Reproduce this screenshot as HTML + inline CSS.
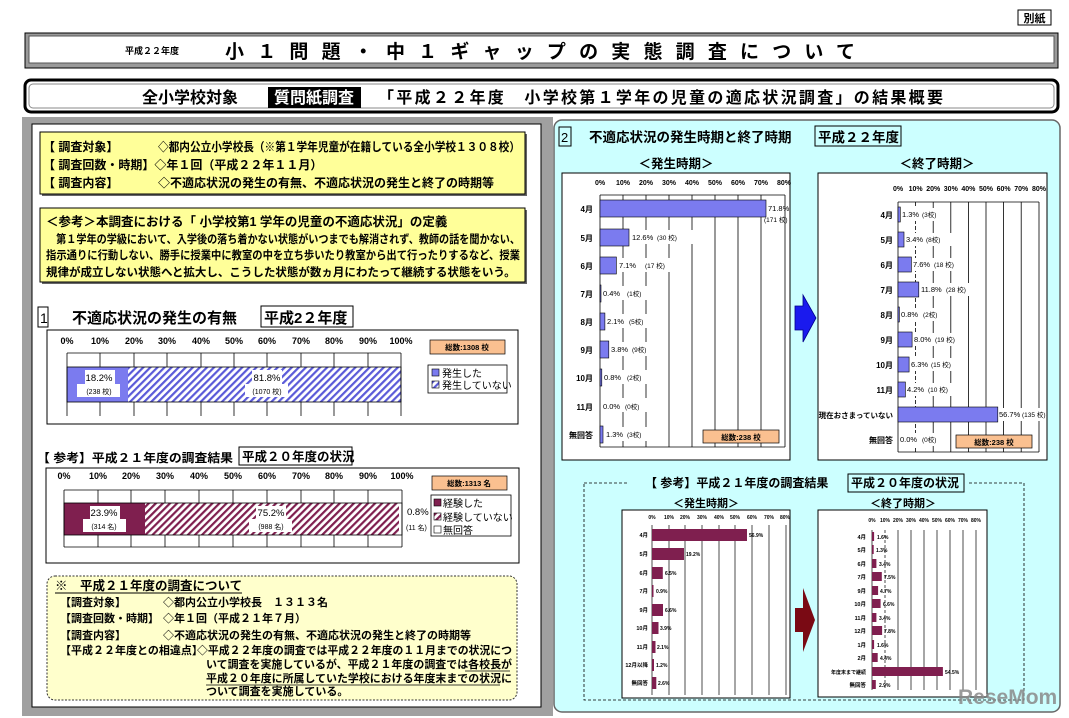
<!DOCTYPE html>
<html><head><meta charset="utf-8"><style>
html,body{margin:0;padding:0;background:#fff;}
svg{display:block;font-family:"Liberation Sans","Noto Sans CJK JP",sans-serif;}
.b{font-weight:bold;}
</style></head><body>
<svg width="1069" height="718" viewBox="0 0 1069 718" xmlns="http://www.w3.org/2000/svg">
<defs>
<pattern id="hb" width="5" height="5" patternUnits="userSpaceOnUse" patternTransform="rotate(45)"><rect width="5" height="5" fill="#fff"/><rect width="2.2" height="5" fill="#5a5ad8"/></pattern>
<pattern id="hm" width="5" height="5" patternUnits="userSpaceOnUse" patternTransform="rotate(45)"><rect width="5" height="5" fill="#fff"/><rect width="2.2" height="5" fill="#7f1f4f"/></pattern>
</defs>
<rect x="1018" y="10" width="33" height="15" fill="#fff" stroke="#000"/>
<text x="1034.5" y="22" font-size="11" text-anchor="middle" class="b">別紙</text>
<rect x="25" y="33" width="1033" height="35" fill="#9a9a9a" stroke="#000"/>
<rect x="29" y="36" width="1025" height="27" fill="#fff" stroke="#555"/>
<text x="125" y="54" font-size="9" class="b">平成２２年度</text>
<text x="225" y="58" font-size="19" class="b" textLength="630" lengthAdjust="spacing">小１問題・中１ギャップの実態調査について</text>
<rect x="25" y="80" width="1033" height="32" rx="6" fill="#fff" stroke="#000" stroke-width="3"/>
<rect x="29" y="84" width="1025" height="24" rx="4" fill="none" stroke="#888" stroke-width="1"/>
<text x="142" y="103" font-size="16" class="b">全小学校対象</text>
<rect x="268" y="87" width="93" height="21" fill="#000"/>
<text x="314" y="103" font-size="16" class="b" fill="#fff" text-anchor="middle">質問紙調査</text>
<text x="378" y="103" font-size="16" class="b" textLength="565" lengthAdjust="spacing">「平成２２年度　小学校第１学年の児童の適応状況調査」の結果概要</text>

<rect x="22" y="117" width="531" height="599" fill="#a0a0a0"/>
<rect x="32" y="124" width="509" height="583" fill="#fff" stroke="#000"/>
<rect x="42" y="134" width="485" height="62" fill="#666"/>
<rect x="40" y="132" width="485" height="62" fill="#ffff99" stroke="#000"/>
<g font-size="12" class="b">
<text x="43" y="151">【 調査対象】</text><text x="158" y="151" textLength="362" lengthAdjust="spacingAndGlyphs">◇都内公立小学校長（※第１学年児童が在籍している全小学校１３０８校）</text>
<text x="43" y="169">【 調査回数・時期】◇年１回（平成２２年１１月）</text>
<text x="43" y="187">【 調査内容】</text><text x="158" y="187">◇不適応状況の発生の有無、不適応状況の発生と終了の時期等</text>
</g>
<rect x="42" y="210" width="485" height="74" fill="#666"/>
<rect x="40" y="208" width="485" height="74" fill="#ffff99" stroke="#000"/>
<text x="46" y="226" font-size="12.5" class="b">＜参考＞本調査における「 小学校第1 学年の児童の不適応状況」の定義</text>
<g font-size="11.5" class="b">
<text x="46" y="243" textLength="474" lengthAdjust="spacingAndGlyphs">　第１学年の学級において、入学後の落ち着かない状態がいつまでも解消されず、教師の話を聞かない、</text>
<text x="46" y="259" textLength="474" lengthAdjust="spacingAndGlyphs">指示通りに行動しない、勝手に授業中に教室の中を立ち歩いたり教室から出て行ったりするなど、授業</text>
<text x="46" y="276">規律が成立しない状態へと拡大し、こうした状態が数ヵ月にわたって継続する状態をいう。</text>
</g>
<rect x="38" y="307" width="10" height="20" fill="none" stroke="#000"/>
<text x="40" y="323" font-size="14">1</text>
<text x="72" y="323" font-size="15" class="b">不適応状況の発生の有無</text>
<rect x="261" y="306" width="92" height="21" fill="none" stroke="#000"/>
<text x="264" y="323" font-size="15" class="b">平成2２年度</text>
<rect x="47" y="330" width="471" height="94" fill="#fff" stroke="#000"/>
<g font-size="9" class="b" text-anchor="middle">
<text x="67" y="344">0%</text><text x="100" y="344">10%</text><text x="134" y="344">20%</text><text x="167" y="344">30%</text><text x="201" y="344">40%</text><text x="234" y="344">50%</text><text x="267" y="344">60%</text><text x="301" y="344">70%</text><text x="334" y="344">80%</text><text x="368" y="344">90%</text><text x="401" y="344">100%</text>
</g>
<rect x="67" y="367" width="61" height="35" fill="#7b7bef"/>
<rect x="128" y="367" width="273" height="35" fill="url(#hb)"/>
<g stroke="#000" stroke-width="0.8">
<line x1="67" y1="353" x2="401" y2="353"/>
<line x1="67" y1="353" x2="67" y2="416"/><line x1="100" y1="353" x2="100" y2="367"/><line x1="134" y1="353" x2="134" y2="367"/><line x1="167" y1="353" x2="167" y2="367"/><line x1="201" y1="353" x2="201" y2="367"/><line x1="234" y1="353" x2="234" y2="367"/><line x1="267" y1="353" x2="267" y2="367"/><line x1="301" y1="353" x2="301" y2="367"/><line x1="334" y1="353" x2="334" y2="367"/><line x1="368" y1="353" x2="368" y2="367"/><line x1="401" y1="353" x2="401" y2="416"/>
<line x1="100" y1="402" x2="100" y2="416"/><line x1="134" y1="402" x2="134" y2="416"/><line x1="167" y1="402" x2="167" y2="416"/><line x1="201" y1="402" x2="201" y2="416"/><line x1="234" y1="402" x2="234" y2="416"/><line x1="267" y1="402" x2="267" y2="416"/><line x1="301" y1="402" x2="301" y2="416"/><line x1="334" y1="402" x2="334" y2="416"/><line x1="368" y1="402" x2="368" y2="416"/>
<rect x="67" y="367" width="334" height="35" fill="none"/>
</g>
<rect x="85" y="370" width="30" height="14" fill="#fff"/><rect x="77" y="384" width="43" height="13" fill="#fff"/>
<text x="99" y="381" font-size="9.5" text-anchor="middle">18.2%</text><text x="99" y="394" font-size="7" text-anchor="middle">(238 校)</text>
<rect x="252" y="370" width="30" height="14" fill="#fff"/><rect x="245" y="384" width="43" height="13" fill="#fff"/>
<text x="267" y="381" font-size="9.5" text-anchor="middle">81.8%</text><text x="267" y="394" font-size="7" text-anchor="middle">(1070 校)</text>
<rect x="430" y="340" width="75" height="14" fill="#fac090" stroke="#000" stroke-width="0.7"/>
<text x="467" y="350" font-size="7.5" text-anchor="middle" class="b">総数:1308 校</text>
<rect x="428" y="365" width="79" height="28" fill="#fff" stroke="#000" stroke-width="0.8"/>
<rect x="432" y="369" width="7" height="7" fill="#7b7bef" stroke="#000" stroke-width="0.6"/><text x="442" y="377" font-size="10">発生した</text>
<rect x="432" y="381" width="7" height="7" fill="url(#hb)" stroke="#000" stroke-width="0.6"/><text x="442" y="389" font-size="10">発生していない</text>

<text x="37" y="462" font-size="12" class="b" textLength="196" lengthAdjust="spacingAndGlyphs">【 参考】平成２１年度の調査結果</text>
<rect x="239" y="447" width="113" height="18" fill="none" stroke="#000"/>
<text x="242" y="461" font-size="12.5" class="b">平成２０年度の状況</text>
<rect x="46" y="468" width="473" height="95" fill="#fff" stroke="#000"/>
<g font-size="9" class="b" text-anchor="middle">
<text x="64" y="479">0%</text><text x="98" y="479">10%</text><text x="131" y="479">20%</text><text x="165" y="479">30%</text><text x="199" y="479">40%</text><text x="233" y="479">50%</text><text x="267" y="479">60%</text><text x="301" y="479">70%</text><text x="334" y="479">80%</text><text x="368" y="479">90%</text><text x="402" y="479">100%</text>
</g>
<rect x="64" y="503" width="81" height="32" fill="#7f1f4f"/>
<rect x="145" y="503" width="254" height="32" fill="url(#hm)"/>
<g stroke="#000" stroke-width="0.8" fill="none">
<line x1="64" y1="490" x2="402" y2="490"/>
<line x1="64" y1="490" x2="64" y2="547"/><line x1="402" y1="490" x2="402" y2="547"/>
<line x1="98" y1="490" x2="98" y2="503"/><line x1="131" y1="490" x2="131" y2="503"/><line x1="165" y1="490" x2="165" y2="503"/><line x1="199" y1="490" x2="199" y2="503"/><line x1="233" y1="490" x2="233" y2="503"/><line x1="267" y1="490" x2="267" y2="503"/><line x1="301" y1="490" x2="301" y2="503"/><line x1="334" y1="490" x2="334" y2="503"/><line x1="368" y1="490" x2="368" y2="503"/>
<line x1="98" y1="535" x2="98" y2="547"/><line x1="131" y1="535" x2="131" y2="547"/><line x1="165" y1="535" x2="165" y2="547"/><line x1="199" y1="535" x2="199" y2="547"/><line x1="233" y1="535" x2="233" y2="547"/><line x1="267" y1="535" x2="267" y2="547"/><line x1="301" y1="535" x2="301" y2="547"/><line x1="334" y1="535" x2="334" y2="547"/><line x1="368" y1="535" x2="368" y2="547"/>
<line x1="64" y1="547" x2="402" y2="547"/>
<rect x="64" y="503" width="338" height="32"/>
</g>
<rect x="90" y="506" width="30" height="13" fill="#fff"/><rect x="83" y="519" width="43" height="13" fill="#fff"/>
<text x="104" y="516" font-size="9.5" text-anchor="middle">23.9%</text><text x="104" y="529" font-size="7" text-anchor="middle">(314 名)</text>
<rect x="256" y="506" width="30" height="13" fill="#fff"/><rect x="249" y="519" width="43" height="13" fill="#fff"/>
<text x="271" y="516" font-size="9.5" text-anchor="middle">75.2%</text><text x="271" y="529" font-size="7" text-anchor="middle">(988 名)</text>
<text x="407" y="515" font-size="9.5">0.8%</text><text x="406" y="530" font-size="7">(11 名)</text>
<rect x="432" y="476" width="75" height="14" fill="#fac090" stroke="#000" stroke-width="0.7"/>
<text x="469" y="486" font-size="7.5" text-anchor="middle" class="b">総数:1313 名</text>
<rect x="431" y="495" width="80" height="41" fill="#fff" stroke="#000" stroke-width="0.8"/>
<rect x="434" y="499" width="7" height="7" fill="#7f1f4f" stroke="#000" stroke-width="0.6"/><text x="443" y="507" font-size="10">経験した</text>
<rect x="434" y="513" width="7" height="7" fill="url(#hm)" stroke="#000" stroke-width="0.6"/><text x="443" y="521" font-size="10">経験していない</text>
<rect x="434" y="526" width="7" height="7" fill="#fff" stroke="#000" stroke-width="0.6"/><text x="443" y="534" font-size="10">無回答</text>

<rect x="47" y="576" width="470" height="124" rx="8" fill="#ffffcc" stroke="#333" stroke-dasharray="2,1.5"/>
<text x="55" y="590" font-size="12.5" class="b">※　平成２１年度の調査について</text>
<line x1="55" y1="593" x2="242" y2="593" stroke="#000"/>
<g font-size="11" class="b">
<text x="60" y="606">【調査対象】</text><text x="163" y="606">◇都内公立小学校長　１３１３名</text>
<text x="60" y="622">【調査回数・時期】</text><text x="163" y="622">◇年１回（平成２１年７月）</text>
<text x="60" y="639">【調査内容】</text><text x="163" y="639">◇不適応状況の発生の有無、不適応状況の発生と終了の時期等</text>
<text x="60" y="654">【平成２２年度との相違点】</text><text x="197" y="654" textLength="315" lengthAdjust="spacingAndGlyphs">◇平成２２年度の調査では平成２２年度の１１月までの状況につ</text>
<text x="206" y="668" textLength="306" lengthAdjust="spacingAndGlyphs">いて調査を実施しているが、平成２１年度の調査では各校長が</text>
<text x="206" y="682" textLength="306" lengthAdjust="spacingAndGlyphs">平成２０年度に所属していた学校における年度末までの状況に</text>
<text x="206" y="695">ついて調査を実施している。</text>
</g>
<line x1="465" y1="671" x2="510" y2="671" stroke="#000" stroke-width="0.8"/>
<line x1="206" y1="685" x2="500" y2="685" stroke="#000" stroke-width="0.8"/>

<rect x="554" y="120" width="506" height="592" rx="8" fill="#ccffff" stroke="#666" stroke-width="1.5"/>
<rect x="559" y="127" width="12" height="19" fill="none" stroke="#000"/>
<text x="561" y="142" font-size="13">2</text>
<text x="589" y="142" font-size="13.5" class="b">不適応状況の発生時期と終了時期</text>
<rect x="815" y="126" width="86" height="20" fill="none" stroke="#000"/>
<text x="818" y="142" font-size="13.5" class="b">平成２２年度</text>
<text x="676" y="168" font-size="12.5" class="b" text-anchor="middle">＜発生時期＞</text>
<text x="937" y="168" font-size="12.5" class="b" text-anchor="middle">＜終了時期＞</text>

<rect x="562" y="173" width="228" height="287" fill="#fff" stroke="#000"/>
<g font-size="7" class="b" text-anchor="middle">
<text x="600" y="185">0%</text><text x="623" y="185">10%</text><text x="646" y="185">20%</text><text x="669" y="185">30%</text><text x="692" y="185">40%</text><text x="715" y="185">50%</text><text x="738" y="185">60%</text><text x="761" y="185">70%</text><text x="784" y="185">80%</text>
</g>
<g stroke="#000" stroke-width="0.8">
<line x1="600" y1="195" x2="785" y2="195"/>
<line x1="600" y1="195" x2="600" y2="447"/><line x1="623" y1="195" x2="623" y2="447"/><line x1="646" y1="195" x2="646" y2="447"/><line x1="669" y1="195" x2="669" y2="447"/><line x1="692" y1="195" x2="692" y2="447"/><line x1="715" y1="195" x2="715" y2="447"/><line x1="738" y1="195" x2="738" y2="447"/><line x1="761" y1="195" x2="761" y2="447"/><line x1="785" y1="195" x2="785" y2="447"/>
<line x1="600" y1="447" x2="785" y2="447"/>
</g>
<g fill="#7b7bef" stroke="#000" stroke-width="0.6">
<rect x="600" y="200" width="166" height="17"/><rect x="600" y="229" width="29" height="17"/><rect x="600" y="257" width="16.4" height="17"/><rect x="600" y="285" width="1" height="17"/><rect x="600" y="313" width="4.9" height="17"/><rect x="600" y="341" width="8.8" height="17"/><rect x="600" y="369" width="1.8" height="17"/><rect x="600" y="426" width="3" height="17"/>
</g>
<g fill="#fff"><rect x="632" y="230" width="70" height="14"/><rect x="619" y="258" width="60" height="14"/><rect x="603" y="286" width="60" height="14"/><rect x="607" y="314" width="56" height="14"/><rect x="611" y="342" width="52" height="14"/><rect x="604" y="370" width="58" height="14"/><rect x="603" y="398" width="58" height="14"/><rect x="606" y="427" width="56" height="14"/></g>
<g font-size="8" text-anchor="end" class="b">
<text x="593" y="212">4月</text><text x="593" y="241">5月</text><text x="593" y="269">6月</text><text x="593" y="297">7月</text><text x="593" y="325">8月</text><text x="593" y="353">9月</text><text x="593" y="381">10月</text><text x="593" y="410">11月</text><text x="593" y="438">無回答</text>
</g>
<g font-size="7.5">
<text x="768" y="211">71.8%</text><text x="764" y="222" font-size="6.5">(171 校)</text>
<text x="632" y="240">12.6%</text><text x="657" y="240" font-size="6.5">(30 校)</text>
<text x="619" y="268">7.1%</text><text x="645" y="268" font-size="6.5">(17 校)</text>
<text x="603" y="296">0.4%</text><text x="627" y="296" font-size="6.5">(1校)</text>
<text x="607" y="324">2.1%</text><text x="629" y="324" font-size="6.5">(5校)</text>
<text x="611" y="352">3.8%</text><text x="632" y="352" font-size="6.5">(9校)</text>
<text x="604" y="380">0.8%</text><text x="627" y="380" font-size="6.5">(2校)</text>
<text x="603" y="409">0.0%</text><text x="625" y="409" font-size="6.5">(0校)</text>
<text x="606" y="437">1.3%</text><text x="627" y="437" font-size="6.5">(3校)</text>
</g>
<rect x="703" y="430" width="76" height="13" fill="#fac090" stroke="#000" stroke-width="0.7"/>
<text x="741" y="440" font-size="7.5" text-anchor="middle" class="b">総数:238 校</text>

<path d="M795 306 L803 306 L803 295 L816 318 L803 342 L803 330 L795 330 Z" fill="#1a1aee" stroke="#00008b" stroke-width="0.8"/>

<rect x="818" y="173" width="229" height="287" fill="#fff" stroke="#000"/>
<g font-size="7" class="b" text-anchor="middle">
<text x="898" y="191">0%</text><text x="915.6" y="191">10%</text><text x="933.2" y="191">20%</text><text x="950.8" y="191">30%</text><text x="968.4" y="191">40%</text><text x="986" y="191">50%</text><text x="1003.6" y="191">60%</text><text x="1021.2" y="191">70%</text><text x="1039" y="191">80%</text>
</g>
<g stroke="#000" stroke-width="0.8">
<line x1="898" y1="202" x2="1039" y2="202"/>
<line x1="898" y1="202" x2="898" y2="452"/><line x1="915.6" y1="202" x2="915.6" y2="452" stroke-dasharray="4,2"/><line x1="933.2" y1="202" x2="933.2" y2="452"/><line x1="950.8" y1="202" x2="950.8" y2="452"/><line x1="968.4" y1="202" x2="968.4" y2="452"/><line x1="986" y1="202" x2="986" y2="452"/><line x1="1003.6" y1="202" x2="1003.6" y2="452"/><line x1="1021.2" y1="202" x2="1021.2" y2="452"/><line x1="1039" y1="202" x2="1039" y2="452"/>
<line x1="898" y1="452" x2="1039" y2="452"/>
</g>
<g fill="#7b7bef" stroke="#000" stroke-width="0.6">
<rect x="898" y="207" width="2.3" height="15"/><rect x="898" y="232" width="6" height="15"/><rect x="898" y="257" width="13.4" height="15"/><rect x="898" y="282" width="20.8" height="15"/><rect x="898" y="307" width="1.4" height="15"/><rect x="898" y="332" width="14.1" height="15"/><rect x="898" y="357" width="11.1" height="15"/><rect x="898" y="382" width="7.4" height="15"/><rect x="898" y="407" width="99.8" height="15"/>
</g>
<g fill="#fff"><rect x="902" y="208" width="48" height="13"/><rect x="906" y="233" width="46" height="13"/><rect x="913" y="258" width="50" height="13"/><rect x="921" y="283" width="50" height="13"/><rect x="901" y="308" width="46" height="13"/><rect x="914" y="333" width="50" height="13"/><rect x="911" y="358" width="50" height="13"/><rect x="907" y="383" width="50" height="13"/><rect x="999" y="408" width="46" height="13"/><rect x="900" y="433" width="46" height="13"/></g>
<g font-size="8" text-anchor="end" class="b">
<text x="893" y="218">4月</text><text x="893" y="243">5月</text><text x="893" y="268">6月</text><text x="893" y="293">7月</text><text x="893" y="318">8月</text><text x="893" y="343">9月</text><text x="893" y="368">10月</text><text x="893" y="393">11月</text><text x="893" y="418" font-size="7.5">現在おさまっていない</text><text x="893" y="443">無回答</text>
</g>
<g font-size="7.5">
<text x="902" y="217">1.3%</text><text x="922" y="217" font-size="6.5">(3校)</text>
<text x="906" y="242">3.4%</text><text x="926" y="242" font-size="6.5">(8校)</text>
<text x="913" y="267">7.6%</text><text x="934" y="267" font-size="6.5">(18 校)</text>
<text x="921" y="292">11.8%</text><text x="946" y="292" font-size="6.5">(28 校)</text>
<text x="901" y="317">0.8%</text><text x="923" y="317" font-size="6.5">(2校)</text>
<text x="914" y="342">8.0%</text><text x="935" y="342" font-size="6.5">(19 校)</text>
<text x="911" y="367">6.3%</text><text x="931" y="367" font-size="6.5">(15 校)</text>
<text x="907" y="392">4.2%</text><text x="928" y="392" font-size="6.5">(10 校)</text>
<text x="999" y="417">56.7%</text><text x="1022" y="417" font-size="6.5">(135 校)</text>
<text x="900" y="442">0.0%</text><text x="922" y="442" font-size="6.5">(0校)</text>
</g>
<rect x="956" y="435" width="76" height="13" fill="#fac090" stroke="#000" stroke-width="0.7"/>
<text x="994" y="445" font-size="7.5" text-anchor="middle" class="b">総数:238 校</text>

<rect x="584" y="483" width="440" height="217" fill="none" stroke="#000" stroke-dasharray="3,2" stroke-width="0.8"/>
<rect x="629" y="474" width="340" height="18" fill="#ccffff"/>
<text x="645" y="487" font-size="12" class="b">【 参考】平成２１年度の調査結果</text>
<rect x="848" y="474" width="116" height="18" fill="none" stroke="#000"/>
<text x="851" y="487" font-size="12" class="b">平成２０年度の状況</text>
<text x="706" y="507" font-size="11" class="b" text-anchor="middle">＜発生時期＞</text>
<text x="903" y="507" font-size="11" class="b" text-anchor="middle">＜終了時期＞</text>

<rect x="622" y="510" width="168" height="188" fill="#fff" stroke="#000"/>
<g font-size="5" class="b" text-anchor="middle">
<text x="652" y="519">0%</text><text x="669" y="519">10%</text><text x="685" y="519">20%</text><text x="702" y="519">30%</text><text x="719" y="519">40%</text><text x="735" y="519">50%</text><text x="752" y="519">60%</text><text x="769" y="519">70%</text><text x="785" y="519">80%</text>
</g>
<g stroke="#000" stroke-width="0.7">
<line x1="652" y1="525" x2="652" y2="695"/><line x1="669" y1="525" x2="669" y2="695"/><line x1="685" y1="525" x2="685" y2="695"/><line x1="702" y1="525" x2="702" y2="695"/><line x1="719" y1="525" x2="719" y2="695"/><line x1="735" y1="525" x2="735" y2="695"/><line x1="752" y1="525" x2="752" y2="695"/><line x1="769" y1="525" x2="769" y2="695"/><line x1="786" y1="525" x2="786" y2="695"/>
</g>
<g fill="#7f1f4f">
<rect x="652" y="529" width="95" height="12"/><rect x="652" y="548" width="32" height="12"/><rect x="652" y="567" width="10.8" height="12"/><rect x="652" y="585" width="1.5" height="12"/><rect x="652" y="604" width="11" height="12"/><rect x="652" y="622" width="6.5" height="12"/><rect x="652" y="641" width="3.5" height="12"/><rect x="652" y="659" width="2" height="12"/><rect x="652" y="677" width="4.3" height="12"/>
</g>
<g font-size="5.5" class="b" text-anchor="end">
<text x="648" y="537">4月</text><text x="648" y="556">5月</text><text x="648" y="575">6月</text><text x="648" y="593">7月</text><text x="648" y="612">9月</text><text x="648" y="630">10月</text><text x="648" y="649">11月</text><text x="648" y="667">12月以降</text><text x="648" y="685">無回答</text>
</g>
<g font-size="5" class="b">
<text x="749" y="537">56.9%</text><text x="686" y="556">19.2%</text><text x="665" y="575">6.5%</text><text x="656" y="593">0.9%</text><text x="665" y="612">6.6%</text><text x="660" y="630">3.9%</text><text x="657" y="649">2.1%</text><text x="656" y="667">1.2%</text><text x="658" y="685">2.6%</text>
</g>
<path d="M795 608 L803 608 L803 588 L815 620 L803 652 L803 632 L795 632 Z" fill="#7a0a14"/>
<rect x="818" y="510" width="169" height="187" fill="#fff" stroke="#000"/>
<g font-size="5" class="b" text-anchor="middle">
<text x="872" y="522">0%</text><text x="885" y="522">10%</text><text x="898" y="522">20%</text><text x="911" y="522">30%</text><text x="924" y="522">40%</text><text x="937" y="522">50%</text><text x="950" y="522">60%</text><text x="963" y="522">70%</text><text x="976" y="522">80%</text>
</g>
<g stroke="#000" stroke-width="0.7">
<line x1="872" y1="530" x2="872" y2="690"/><line x1="885" y1="530" x2="885" y2="690" stroke-dasharray="3,2"/><line x1="898" y1="530" x2="898" y2="690"/><line x1="911" y1="530" x2="911" y2="690"/><line x1="924" y1="530" x2="924" y2="690"/><line x1="937" y1="530" x2="937" y2="690"/><line x1="950" y1="530" x2="950" y2="690"/><line x1="963" y1="530" x2="963" y2="690"/><line x1="976" y1="530" x2="976" y2="690"/>
</g>
<g fill="#7f1f4f">
<rect x="872" y="532" width="2.1" height="9"/><rect x="872" y="545" width="1.7" height="9"/><rect x="872" y="559" width="4.4" height="9"/><rect x="872" y="572" width="9.8" height="9"/><rect x="872" y="586" width="6.1" height="9"/><rect x="872" y="599" width="8.6" height="9"/><rect x="872" y="613" width="4.4" height="9"/><rect x="872" y="626" width="10.1" height="9"/><rect x="872" y="640" width="2.1" height="9"/><rect x="872" y="653" width="5.7" height="9"/><rect x="872" y="667" width="70.9" height="9"/><rect x="872" y="680" width="3.8" height="9"/>
</g>
<g font-size="5.5" class="b" text-anchor="end">
<text x="866" y="539">4月</text><text x="866" y="552">5月</text><text x="866" y="566">6月</text><text x="866" y="579">7月</text><text x="866" y="593">9月</text><text x="866" y="606">10月</text><text x="866" y="620">11月</text><text x="866" y="633">12月</text><text x="866" y="647">1月</text><text x="866" y="660">2月</text><text x="866" y="674" font-size="5">年度末まで継続</text><text x="866" y="687">無回答</text>
</g>
<g font-size="5" class="b">
<text x="877" y="539">1.6%</text><text x="876" y="552">1.3%</text><text x="879" y="566">3.4%</text><text x="884" y="579">7.5%</text><text x="880" y="593">4.7%</text><text x="883" y="606">6.6%</text><text x="879" y="620">3.4%</text><text x="884" y="633">7.8%</text><text x="877" y="647">1.6%</text><text x="880" y="660">4.4%</text><text x="945" y="674">54.5%</text><text x="879" y="687">2.9%</text>
</g>
<text x="958" y="704" font-size="21" class="b" fill="#8a8a8a" opacity="0.85">ReseMom</text>
</svg>
</body></html>
